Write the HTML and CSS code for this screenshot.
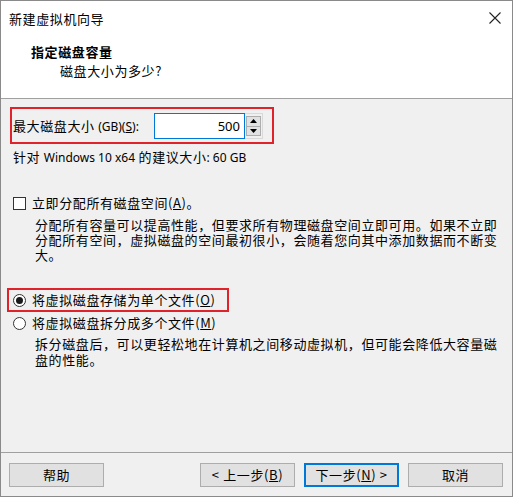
FILE: index.html
```html
<!DOCTYPE html>
<html lang="zh-CN">
<head>
<meta charset="utf-8">
<title>新建虚拟机向导</title>
<link rel="stylesheet" href="styles.css">
</head>
<body>
<div class="window">
  <div class="titlebar">
    <span class="title">新建虚拟机向导</span>
    <svg class="close" width="12" height="12" viewBox="0 0 12 12"><path d="M0.5 0.5 L11.5 11.5 M11.5 0.5 L0.5 11.5" stroke="#222" stroke-width="1.1" fill="none"/></svg>
  </div>
  <div class="header">
    <div class="h-title">指定磁盘容量</div>
    <div class="h-sub">磁盘大小为多少?</div>
  </div>
  <div class="sep"></div>
  <div class="content">
    <div class="size-row">
      <span class="label">最大磁盘大小 <span class="lat">(GB)(<u>S</u>):</span></span>
      <div class="spin">
        <div class="input">500</div>
        <div class="spin-btns">
          <div class="sbtn"><svg width="7" height="4" viewBox="0 0 7 4"><path d="M0 4 L3.5 0 L7 4 Z" fill="#000"/></svg></div>
          <div class="sbtn"><svg width="7" height="4" viewBox="0 0 7 4"><path d="M0 0 L3.5 4 L7 0 Z" fill="#000"/></svg></div>
        </div>
      </div>
    </div>
    <div class="rec">针对 <span class="lat">Windows 10 x64</span> 的建议大小<span class="lat">: 60 GB</span></div>
    <div class="check-row">
      <span class="checkbox"></span>
      <span>立即分配所有磁盘空间(<u>A</u>)。</span>
    </div>
    <p class="desc">分配所有容量可以提高性能，但要求所有物理磁盘空间立即可用。如果不立即<br>分配所有空间，虚拟磁盘的空间最初很小，会随着您向其中添加数据而不断变<br>大。</p>
    <div class="radio-row boxed">
      <span class="radio checked"></span>
      <span>将虚拟磁盘存储为单个文件(<u>O</u>)</span>
    </div>
    <div class="radio-row">
      <span class="radio"></span>
      <span>将虚拟磁盘拆分成多个文件(<u>M</u>)</span>
    </div>
    <p class="desc desc2">拆分磁盘后，可以更轻松地在计算机之间移动虚拟机，但可能会降低大容量磁<br>盘的性能。</p>
  </div>
  <div class="sep"></div>
  <div class="footer">
    <button class="btn">帮助</button>
    <div class="spacer"></div>
    <button class="btn">&lt; 上一步(<u>B</u>)</button>
    <button class="btn default">下一步(<u>N</u>) &gt;</button>
    <button class="btn">取消</button>
  </div>
</div>
</body>
</html>
```

FILE: styles.css
```css
* { box-sizing: border-box; }
html, body { margin: 0; padding: 0; background: #ffffff; }
body {
  font-family: "Noto Sans CJK SC", "Noto Sans", sans-serif;
  font-size: 13px;
  letter-spacing: 0.6px;
  color: #000;
}
.window {
  width: 513px;
  height: 497px;
  border: 1px solid #8a8a8a;
  display: flex;
  flex-direction: column;
  background: #f0f0f0;
}
.lat { letter-spacing: 0; font-family: "Noto Sans", "Noto Sans CJK SC", sans-serif; font-size: 12px; }
u { text-decoration: underline; text-underline-offset: 1px; }

.titlebar {
  height: 33px;
  background: #fff;
  display: flex;
  align-items: center;
  padding: 0 11px 0 8px;
  flex: none;
}
.title { flex: 1; line-height: 16px; padding-top: 2px; }
.close { display: block; }

.header {
  height: 64px;
  background: #fff;
  padding-top: 10px;
  flex: none;
}
.h-title {
  font-weight: bold;
  line-height: 16px;
  padding-left: 30px;
}
.h-sub {
  line-height: 16px;
  margin-top: 3px;
  padding-left: 59px;
}
.sep { height: 1px; background: #a0a0a0; flex: none; }

.content {
  flex: 1;
  padding: 8px 12px 0 12px;
  display: flex;
  flex-direction: column;
  align-items: flex-start;
}
.size-row {
  display: flex;
  align-items: center;
  border: 2px solid #e0222a;
  margin-left: -3px;
  padding: 4px 9px 3px 1px;
  width: 264px;
}
.label { line-height: 16px; flex: 1; white-space: nowrap; }
.spin { display: flex; height: 26px; }
.input {
  width: 91px;
  height: 26px;
  background: #fff;
  border: 1px solid #0078d7;
  text-align: right;
  padding-right: 4px;
  line-height: 24px;
  font-family: "Noto Sans", sans-serif;
  letter-spacing: 0;
  font-size: 13px;
}
.spin-btns {
  width: 18px;
  display: flex;
  flex-direction: column;
  padding: 2px 1px;
  background: #f0f0f0;
  border: 1px solid #d9d9d9;
  border-left: none;
}
.sbtn {
  flex: 1;
  background: #e1e1e1;
  border: 1px solid #adadad;
  display: flex;
  align-items: center;
  justify-content: center;
}
.sbtn + .sbtn { border-top: none; }
.sbtn svg { display: block; }

.rec { line-height: 16px; margin-top: 5px; white-space: nowrap; }

.check-row {
  display: flex;
  align-items: center;
  gap: 6px;
  line-height: 16px;
  margin-top: 29px;
}
.checkbox {
  width: 13px;
  height: 13px;
  border: 1px solid #333;
  background: #fff;
  flex: none;
}
.desc {
  margin: 6px 0 0 22px;
  line-height: 15px;
  white-space: nowrap;
}
.radio-row {
  display: flex;
  align-items: center;
  gap: 6px;
  line-height: 16px;
}
.radio-row.boxed {
  margin-top: 26px;
  margin-left: -6px;
  border: 2px solid #e0222a;
  padding: 2px 4px;
  width: 222px;
}
.radio-row.boxed + .radio-row { margin-top: 3px; }
.radio {
  width: 13px;
  height: 13px;
  border: 1px solid #333;
  border-radius: 50%;
  background: #fff;
  flex: none;
  display: flex;
  align-items: center;
  justify-content: center;
}
.radio.checked::after {
  content: "";
  width: 7px;
  height: 7px;
  border-radius: 50%;
  background: #1a1a1a;
}
.desc2 { margin-top: 5px; line-height: 16px; }

.footer {
  height: 43px;
  flex: none;
  display: flex;
  padding: 10px 9px 0 8px;
  gap: 9px;
  align-items: flex-start;
}
.spacer { flex: 1; }
.btn {
  width: 95px;
  height: 24px;
  background: #e1e1e1;
  border: 1px solid #adadad;
  font: inherit;
  letter-spacing: 0.6px;
  color: #000;
  padding: 0;
  line-height: 20px;
}
.btn.default { border: 2px solid #0078d7; }
```
